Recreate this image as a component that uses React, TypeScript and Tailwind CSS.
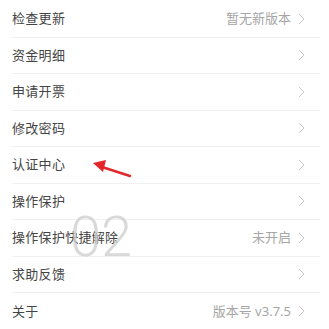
import React from 'react';

type Row = { label: string; value?: string };

const rows: Row[] = [
  { label: '检查更新', value: '暂无新版本' },
  { label: '资金明细' },
  { label: '申请开票' },
  { label: '修改密码' },
  { label: '认证中心' },
  { label: '操作保护' },
  { label: '操作保护快捷解除', value: '未开启' },
  { label: '求助反馈' },
  { label: '关于', value: '版本号 v3.7.5' },
];

const Chevron = () => (
  <svg width="7" height="12" viewBox="0 0 7 12" className="ml-[7px] shrink-0">
    <path d="M1 1l5 5-5 5" fill="none" stroke="#c8c8c8" strokeWidth="1" />
  </svg>
);

export default function App() {
  return (
    <div
      className="relative w-[329px] h-[329px] overflow-hidden bg-white pt-[1px]"
      style={{ fontFamily: '"Noto Sans", "Noto Sans CJK SC", sans-serif' }}
    >
      <div className="ml-[12px] mr-[9px]">
        {rows.map((r, i) => (
          <div
            key={r.label}
            className={`flex items-center h-[36.5px] ${i < rows.length - 1 ? 'border-b border-[#f0f0f0]' : ''}`}
          >
            <span className="text-[13px] text-[#444] tracking-[0.3px]">{r.label}</span>
            <div className="ml-auto flex items-center pr-[15px]">
              {r.value && <span className="text-[13px] text-[#a6a6a6]">{r.value}</span>}
              <Chevron />
            </div>
          </div>
        ))}
      </div>

      {/* watermark */}
      <div
        className="absolute left-[70px] top-[209px] text-[56px] leading-none font-light text-[#cfcfcf]/80 select-none"
        style={{ fontFamily: 'Roboto, "Open Sans", sans-serif' }}
      >
        02
      </div>

      {/* red arrow */}
      <svg className="absolute left-[88px] top-[156px]" width="48" height="26" viewBox="0 0 48 26">
        <line x1="14" y1="11" x2="42" y2="20" stroke="#e3262a" strokeWidth="2.4" strokeLinecap="round" />
        <polygon points="5,7 18,4 15,16" fill="#e3262a" />
      </svg>
    </div>
  );
}
